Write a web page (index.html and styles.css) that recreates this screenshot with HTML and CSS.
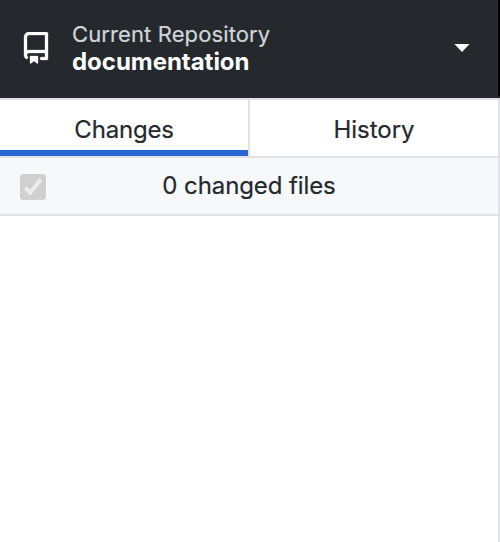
FILE: index.html
```html
<!DOCTYPE html>
<html lang="en">
<head>
<meta charset="utf-8">
<title>Current Repository</title>
<link rel="stylesheet" href="styles.css">
</head>
<body>
<div class="app">
  <header class="toolbar">
    <div class="repository">
      <svg class="repo-icon" viewBox="0 0 16 16" aria-hidden="true"><path fill-rule="evenodd" d="M2 2.5A2.5 2.5 0 014.5 0h8.75a.75.75 0 01.75.75v12.5a.75.75 0 01-.75.75h-2.5a.75.75 0 110-1.5h1.75v-2h-8a1 1 0 00-.714 1.7.75.75 0 01-1.072 1.05A2.495 2.495 0 012 11.5v-9zm10.500-1h-8a1 1 0 00-1 1v6.708A2.486 2.486 0 014.500 9h8V1.500zM5 12.250v3.250a.25.25 0 00.4.2l1.450-1.087a.25.25 0 01.3 0L8.600 15.700a.25.25 0 00.4-.2v-3.250a.25.25 0 00-.25-.25h-3.500a.25.25 0 00-.25.25z"/></svg>
      <div class="repo-text">
        <div class="description"><span>Current Repository</span></div>
        <div class="title"><span>documentation</span></div>
      </div>
      <svg class="caret" viewBox="0 0 16 8" aria-hidden="true"><path d="M.4 0h15.200L8 8z"/></svg>
    </div>
    <div class="toolbar-edge"></div>
  </header>
  <main class="sidebar">
    <nav class="tabs">
      <div class="tab selected"><span class="tab-changes">Changes</span></div>
      <div class="tab"><span class="tab-history">History</span></div>
    </nav>
    <div class="changes-header">
      <svg class="checkbox" viewBox="0 0 26 26" aria-hidden="true"><rect width="26" height="26" rx="3"/><path d="M5 13.800l5.200 5L20.800 5.200"/></svg>
      <span class="count">0 changed files</span>
    </div>
  </main>
</div>
</body>
</html>
```
FILE: styles.css
```css
* { box-sizing: border-box; }
body {
  margin: 0;
  background: #fff;
  color: #24292e;
  font: 24px/28px Inter, "Liberation Sans", sans-serif;
  white-space: nowrap;
}
.app { height: 542px; display: flex; flex-direction: column; overflow: hidden; }
.toolbar { height: 98px; display: flex; background: #25292e; }
.repository { flex: 1; display: flex; align-items: center; padding: 0 28px 2px 20px; }
.repo-icon { width: 32px; height: 32px; fill: #fff; stroke: #fff; stroke-width: .15; }
.repo-text { flex: 1; margin-left: 20px; }
.description { font-size: 22px; line-height: 27px; letter-spacing: .11px; color: #d1d5da; -webkit-text-stroke: .2px; }
.title { font-weight: 700; line-height: 27px; letter-spacing: -.03px; color: #fff; }
.caret { width: 16px; height: 8px; fill: #fff; }
.toolbar-edge { width: 2px; height: 96px; background: #000; }
.sidebar { flex: 1; border-top: 2px solid #e1e2e7; border-right: 2px solid #e1e2e7; }
.tabs { height: 58px; display: flex; border-bottom: 2px solid #e1e2e7; }
.tab { flex: 1; display: flex; align-items: center; justify-content: center; padding-top: 3px; }
.tab + .tab { border-left: 2px solid #e1e2e7; }
.tab-changes { letter-spacing: -.2px; }
.selected { flex: 0 0 248px; box-shadow: inset 0 -6px #2867d2; }
.changes-header {
  height: 58px;
  display: grid;
  grid-template-columns: 26px 1fr 26px;
  align-items: center;
  padding: 0 20px;
  background: #f6f8fa;
  border-bottom: 2px solid #e1e2e7;
}
.checkbox { width: 26px; height: 26px; margin-top: 2px; }
.checkbox rect { fill: #d0d0d0; }
.checkbox path { fill: none; stroke: #ededed; stroke-width: 4; }
.count { text-align: center; letter-spacing: -.1px; }
.tab span, .count { -webkit-text-stroke: .2px; }
```
